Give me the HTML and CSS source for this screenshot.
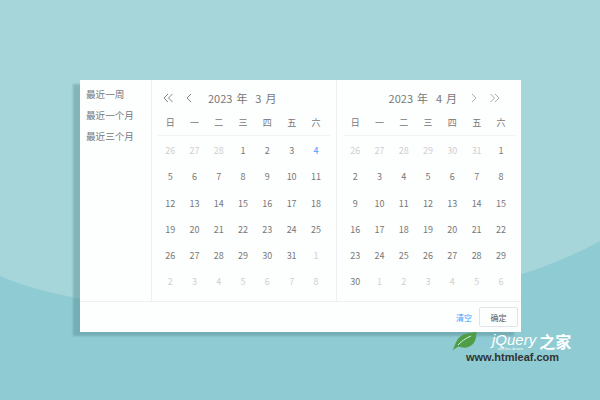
FILE: index.html
```html
<!DOCTYPE html>
<html lang="en">
<head>
  <meta charset="UTF-8">
  <title>Date range picker</title>
  <link rel="stylesheet" href="styles.css">
</head>
<body>
  <svg class="backdrop" width="600" height="400" viewBox="0 0 600 400">
    <path d="M0 276 C110 325 430 335 600 241 V400 H0 Z" fill="#8fcbd2"/>
  </svg>

  <div class="picker">
    <div class="picker-body">
      <ul class="shortcuts">
        <li>最近一周</li>
        <li>最近一个月</li>
        <li>最近三个月</li>
      </ul>

      <div class="panel panel-left">
        <div class="panel-head">
          <svg class="arrow" width="12" height="12" viewBox="0 0 12 12"><path d="M6 2 2 6l4 4M10.500 2l-4 4 4 4"/></svg>
          <svg class="arrow arrow-gap" width="12" height="12" viewBox="0 0 12 12"><path d="M8 2 4 6l4 4"/></svg>
          <span class="month-title">2023 年&nbsp; 3 月</span>
        </div>
        <div class="week"><span>日</span><span>一</span><span>二</span><span>三</span><span>四</span><span>五</span><span>六</span></div>
        <div class="days">
          <span class="off">26</span><span class="off">27</span><span class="off">28</span><span>1</span><span>2</span><span>3</span><span class="today">4</span>
          <span>5</span><span>6</span><span>7</span><span>8</span><span>9</span><span>10</span><span>11</span>
          <span>12</span><span>13</span><span>14</span><span>15</span><span>16</span><span>17</span><span>18</span>
          <span>19</span><span>20</span><span>21</span><span>22</span><span>23</span><span>24</span><span>25</span>
          <span>26</span><span>27</span><span>28</span><span>29</span><span>30</span><span>31</span><span class="off">1</span>
          <span class="off">2</span><span class="off">3</span><span class="off">4</span><span class="off">5</span><span class="off">6</span><span class="off">7</span><span class="off">8</span>
        </div>
      </div>

      <div class="panel panel-right">
        <div class="panel-head head-right">
          <span class="month-title">2023 年&nbsp; 4 月</span>
          <svg class="arrow arrow-light arrow-gap2" width="12" height="12" viewBox="0 0 12 12"><path d="m4 2 4 4-4 4"/></svg>
          <svg class="arrow arrow-light" width="12" height="12" viewBox="0 0 12 12"><path d="m1.500 2 4 4-4 4M6 2l4 4-4 4"/></svg>
        </div>
        <div class="week"><span>日</span><span>一</span><span>二</span><span>三</span><span>四</span><span>五</span><span>六</span></div>
        <div class="days">
          <span class="off">26</span><span class="off">27</span><span class="off">28</span><span class="off">29</span><span class="off">30</span><span class="off">31</span><span>1</span>
          <span>2</span><span>3</span><span>4</span><span>5</span><span>6</span><span>7</span><span>8</span>
          <span>9</span><span>10</span><span>11</span><span>12</span><span>13</span><span>14</span><span>15</span>
          <span>16</span><span>17</span><span>18</span><span>19</span><span>20</span><span>21</span><span>22</span>
          <span>23</span><span>24</span><span>25</span><span>26</span><span>27</span><span>28</span><span>29</span>
          <span>30</span><span class="off">1</span><span class="off">2</span><span class="off">3</span><span class="off">4</span><span class="off">5</span><span class="off">6</span>
        </div>
      </div>
    </div>

    <div class="picker-foot">
      <a class="clear">清空</a>
      <button class="ok">确定</button>
    </div>
  </div>

  <div class="watermark">
    <div class="wm-top">
      <svg class="wm-leaf" width="25" height="19" viewBox="0 0 25 19"><path d="M0 18.500C3 16 3 8 9 4c4-3 9-3 15.500-4 0 7-2 12-7 14.500-4 2-8 1-11 0-2 1-4.500 3-6.500 4Z" fill="#4d9e47"/><path d="M6 13C10 9 13 6.500 19 4" stroke="#d8efe0" fill="none"/></svg>
      <svg class="wm-swirl" width="12" height="14" viewBox="0 0 12 14"><path d="M5 1C1 4 1 10 5 12c2 1 4 1 6-1M7 3C5 5 5 8 7 9c1 .5 2 .5 3 0" stroke="#8fc4e6" fill="none"/></svg>
      <span class="wm-name">jQuery</span><span class="wm-cn">之家</span>
    </div>
    <div class="wm-slogan">write less, do more</div>
    <div class="wm-url">www.htmleaf.com</div>
  </div>
</body>
</html>
```

FILE: styles.css
```css
html, body {
  margin: 0;
  padding: 0;
  width: 600px;
  height: 400px;
  overflow: hidden;
}

body {
  position: relative;
  padding: 80px 0 0 80px;
  box-sizing: border-box;
  background-color: #a6d6d9;
  font-family: "Noto Sans CJK SC", "Liberation Sans", sans-serif;
  color: #777;
}

.backdrop {
  position: absolute;
  top: 0;
  left: 0;
}

.picker {
  position: relative;
  width: 441px;
  height: 252px;
  display: flex;
  flex-direction: column;
  background-color: #fff;
  box-shadow: -7px 4px 2px rgba(70, 120, 130, 0.35);
  opacity: 0.99; /* keeps the small text in plain grey antialiasing */
}

.picker-body {
  flex-grow: 1;
  display: flex;
}

.shortcuts {
  width: 65px;
  margin: 0;
  padding: 4px 0 0 6px;
  list-style: none;
  font-size: 9.600px;
  color: #777;
  border-right: 1px solid #f0f0f0;
}

.shortcuts li {
  height: 21px;
  line-height: 21px;
  white-space: nowrap;
}

.panel {
  width: 184px;
  padding: 0 6px;
  box-sizing: border-box;
}

.panel-left {
  width: 185px;
  border-right: 1px solid #f0f0f0;
}

.panel-head {
  height: 30px;
  display: flex;
  align-items: center;
  padding: 6px 0 0 4px;
  box-sizing: border-box;
  font-size: 11px;
  word-spacing: 1.500px;
}

.head-right {
  justify-content: flex-end;
  padding-right: 8px;
}

.arrow {
  flex-shrink: 0;
  fill: none;
  stroke: #888;
  stroke-width: 1;
}

.arrow-light {
  stroke: #aaa;
}

.arrow-gap {
  margin-left: 9px;
  margin-right: 13px;
}

.arrow-gap2 {
  margin-left: 11px;
  margin-right: 9px;
}

.head-right .arrow:last-child {
  margin-right: 6px;
}

.month-title {
  color: #777;
}

.week, .days {
  display: grid;
  grid-template-columns: repeat(7, 24.300px);
  text-align: center;
}

.week {
  height: 25px;
  line-height: 26px;
  font-size: 9px;
  color: #777;
  border-bottom: 1px solid #f4f4f4;
}

.days {
  grid-auto-rows: 26.300px;
  padding-top: 2px;
  font-size: 9px;
  line-height: 26px;
  color: #777;
}

.days .off {
  color: #d0d0d0;
}

.days .today {
  color: #409eff;
}

.picker-foot {
  height: 30px;
  display: flex;
  justify-content: flex-end;
  align-items: center;
  gap: 7px;
  padding-right: 3px;
  border-top: 1px solid #f0f0f0;
}

.clear {
  font-size: 8px;
  color: #409eff;
}

.ok {
  width: 39px;
  height: 20px;
  padding: 0;
  background-color: #fff;
  border: 1px solid #e2e4ea;
  border-radius: 2px;
  font-family: inherit;
  font-size: 8px;
  color: #555;
}

.watermark {
  position: absolute;
  top: 331px;
  left: 452px;
  width: 130px;
  color: #fff;
}

.wm-top {
  display: flex;
  align-items: center;
  height: 20px;
}

.wm-swirl {
  margin-left: 1px;
}

.wm-name {
  align-self: flex-start;
  margin: 1px 0 0 2px;
  font-family: "Liberation Sans", sans-serif;
  font-style: italic;
  font-size: 15px;
  line-height: 15px;
}

.wm-cn {
  margin-left: 3px;
  font-size: 16px;
  font-weight: 700;
  line-height: 20px;
}

.wm-slogan {
  position: absolute;
  top: 16px;
  left: 46px;
  font-family: "Liberation Sans", sans-serif;
  font-size: 3px;
  line-height: 4px;
  white-space: nowrap;
}

.wm-url {
  margin-left: 14px;
  font-family: "Liberation Sans", sans-serif;
  font-weight: bold;
  font-size: 11px;
  line-height: 12px;
  color: #333;
  white-space: nowrap;
}
```
